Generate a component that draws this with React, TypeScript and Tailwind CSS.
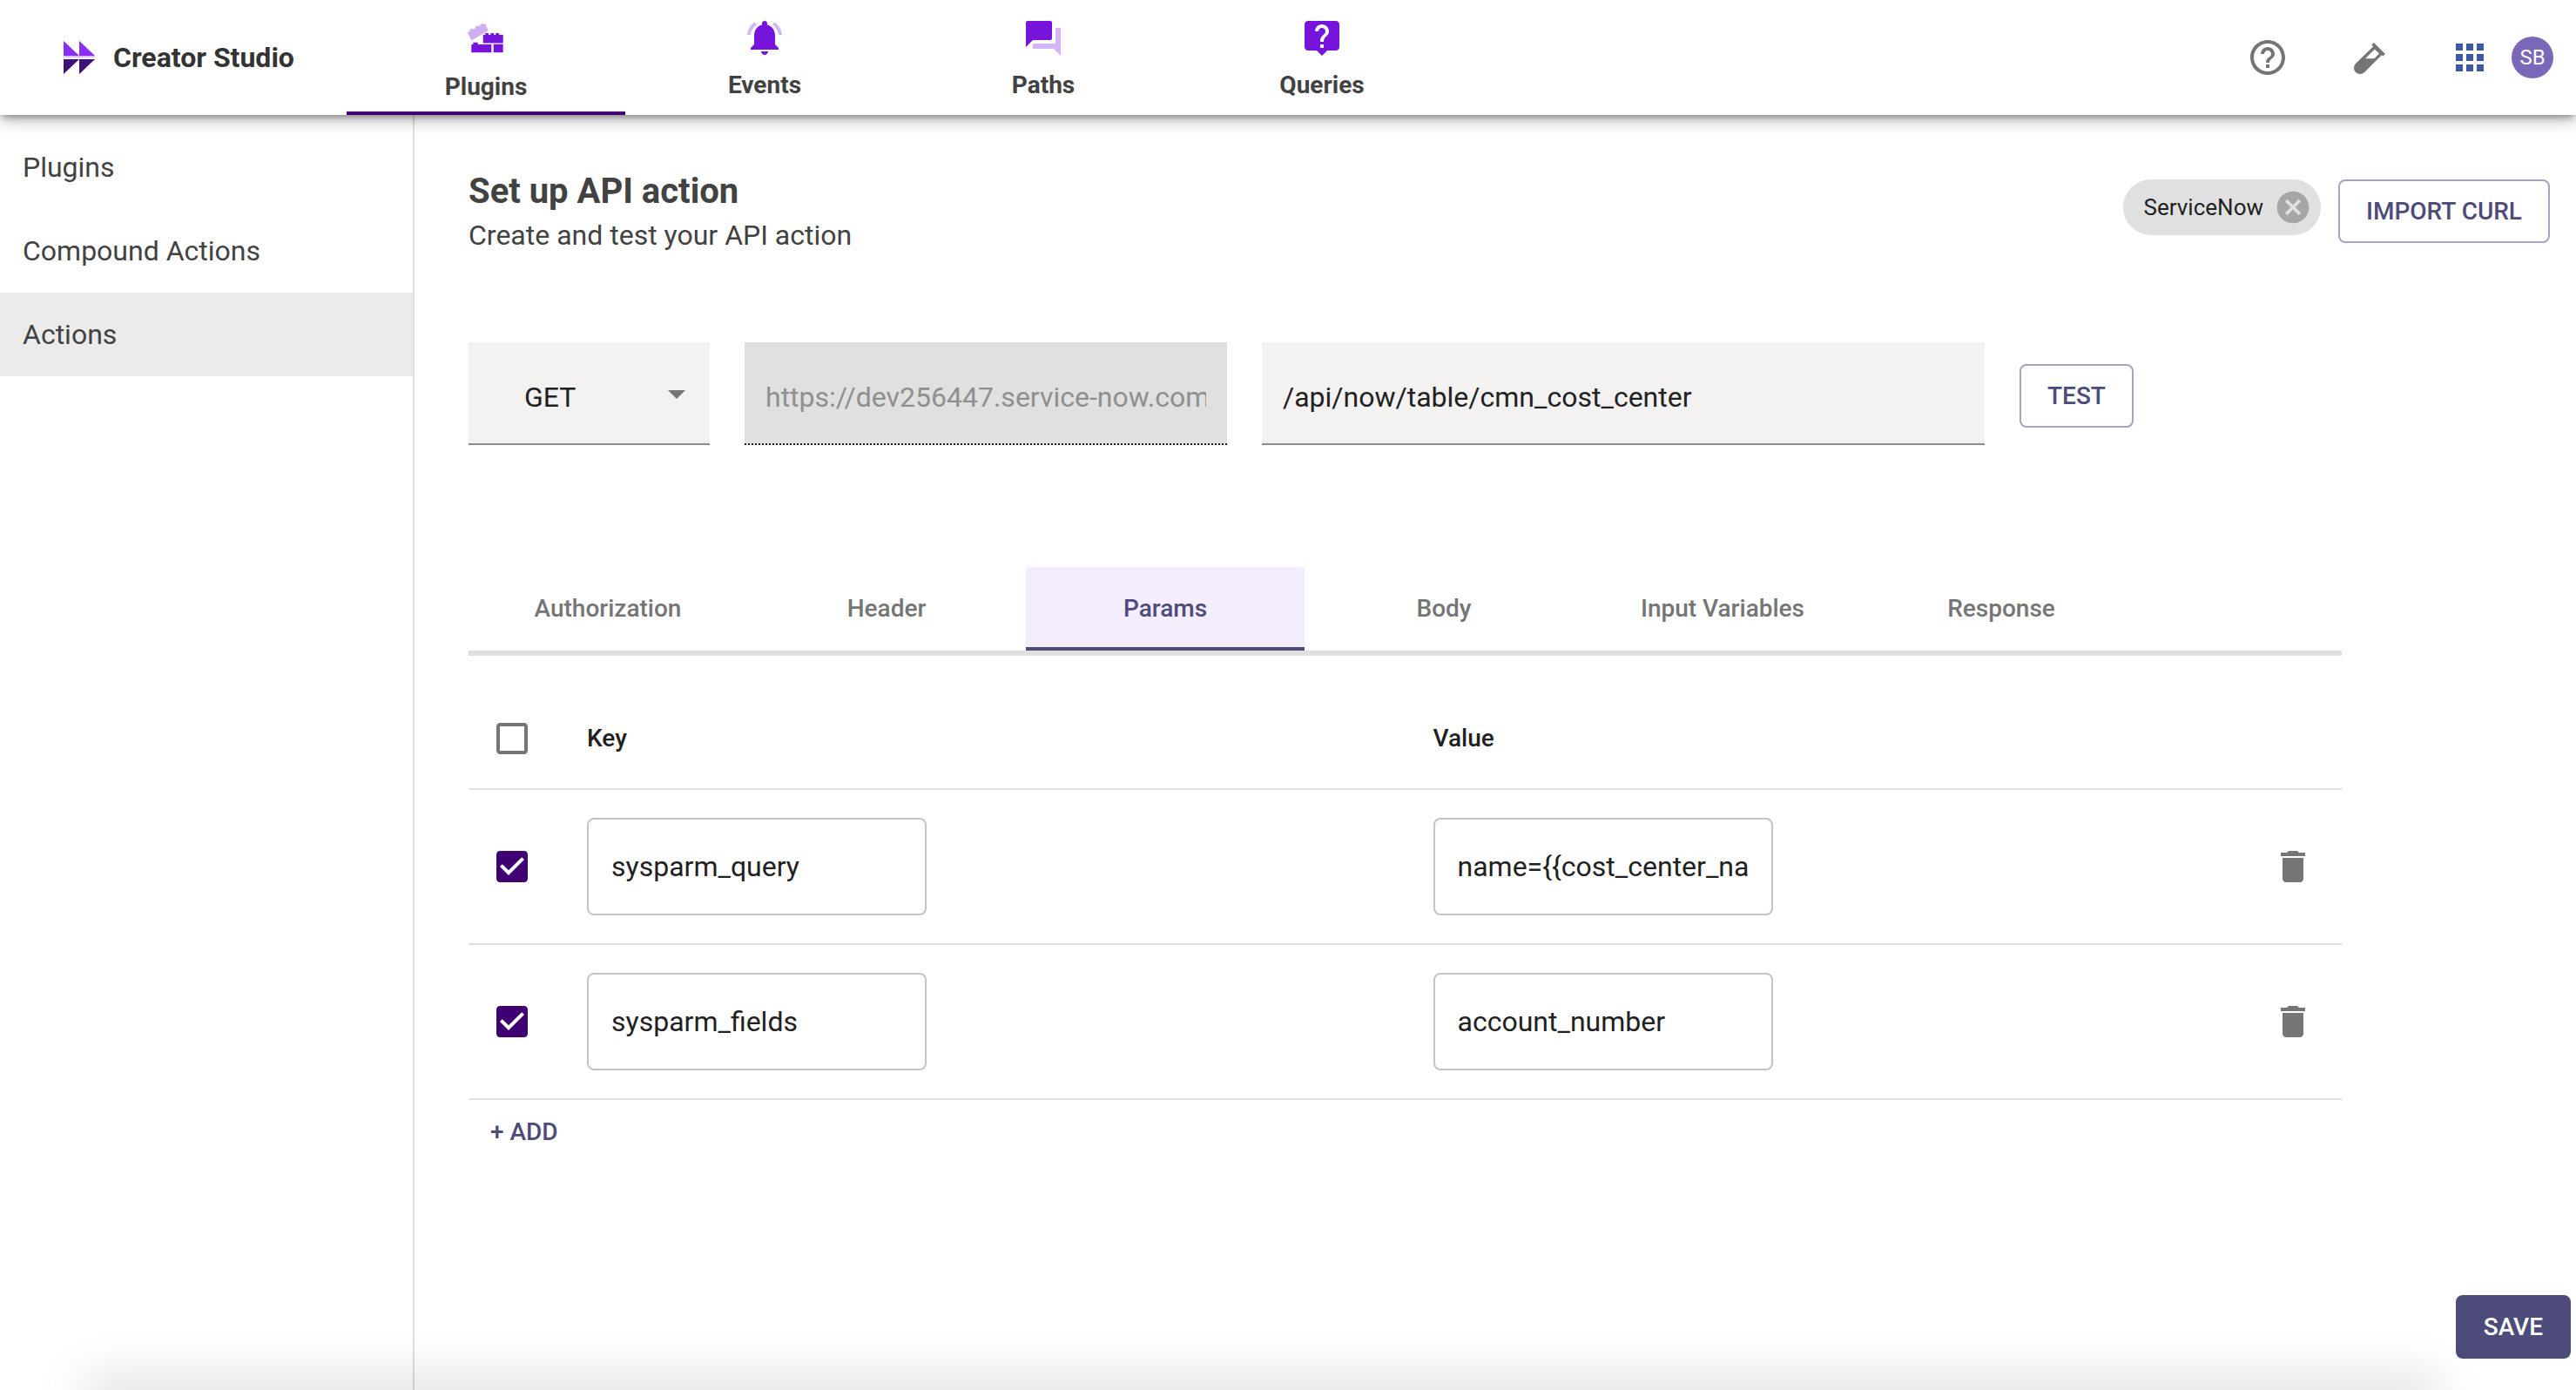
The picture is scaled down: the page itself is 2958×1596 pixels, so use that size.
import React, { useState } from "react";

const navItems = ["Plugins", "Events", "Paths", "Queries"];
const sideItems = ["Plugins", "Compound Actions", "Actions"];
const tabs = ["Authorization", "Header", "Params", "Body", "Input Variables", "Response"];
const initialRows = [
  { key: "sysparm_query", value: "name={{cost_center_name}}" },
  { key: "sysparm_fields", value: "account_number" },
];

function NavIcon({ name }: { name: string }) {
  if (name === "Plugins")
    return (
      <svg viewBox="-1 0 50 50" className="size-[50px]" aria-hidden="true">
        <path
          d="M7.500 26.500 2.800 17.600 5.500 15.800 5.200 14.300 8.400 12.600 9.500 13.700 12 12.300 11.800 10.800 14.600 9.200 16 10.300 17.600 9.400 17.500 8.300 20.400 7 21.600 8 23.600 7.600 26.500 15.200Z"
          fill="#cfaef2"
        />
        <path
          d="M20.700 20h2.600v-2h3.600v2h2.600v-2h3.600v2h2.200v-2h3.600v2h4.800v9.500h-23zM7.300 31h2v-2.300h5.400V31h15.600v9.300h-23zM32.700 30.800h11v9.500h-11z"
          fill="#7614dc"
        />
      </svg>
    );
  if (name === "Events")
    return (
      <svg viewBox="0 0 24 24" className="size-12" aria-hidden="true">
        <path
          d="M7.600 4.100 6.200 2.700C3.800 4.500 2.200 7 2 10h2c.2-2.400 1.500-4.500 3.600-5.900zM20 10h2c-.2-3-1.800-5.500-4.200-7.300l-1.400 1.400c2 1.400 3.400 3.500 3.600 5.900z"
          fill="#d4b5f6"
        />
        <path
          d="M18 10.500c0-3.100-1.600-5.600-4.500-6.300v-.7a1.500 1.500 0 0 0-3 0v.7C7.600 4.900 6 7.400 6 10.500v5l-2 2v1h16v-1l-2-2zM12 21.500c1.100 0 2-.9 2-2h-4c0 1.100.9 2 2 2z"
          fill="#7614dc"
        />
      </svg>
    );
  if (name === "Paths")
    return (
      <svg viewBox="0 0 24 24" className="size-12" aria-hidden="true">
        <path d="M22 6h-3v9H6v3h12l4 4z" fill="#d4b5f6" />
        <path d="M17 12V3c0-.55-.45-1-1-1H3c-.55 0-1 .45-1 1v14l4-4h10c.55 0 1-.45 1-1z" fill="#7614dc" />
      </svg>
    );
  return (
    <svg viewBox="0 0 24 24" className="size-12" aria-hidden="true">
      <path
        d="M20 2H4c-1.100 0-2 .9-2 2v13c0 1.100.9 2 2 2h5l3 3 3-3h5c1.100 0 2-.9 2-2V4c0-1.100-.9-2-2-2zm-7 15.500h-2v-2h2v2zm2.070-7.250-.9.920c-.72.730-1.170 1.330-1.170 2.830h-2v-.5c0-1.100.45-2.100 1.170-2.830l1.240-1.260c.37-.36.590-.86.590-1.410 0-1.100-.9-2-2-2s-2 .9-2 2H8c0-2.210 1.790-4 4-4s4 1.790 4 4c0 .88-.36 1.680-.93 2.250z"
        fill="#7614dc"
      />
    </svg>
  );
}

function CheckBox({ checked, label, onChange }: { checked: boolean; label: string; onChange: () => void }) {
  return (
    <label className="relative grid size-12 cursor-pointer place-items-center">
      <input type="checkbox" aria-label={label} checked={checked} onChange={onChange} className="absolute size-9 opacity-0" />
      <svg viewBox="0 0 24 24" className="size-12" aria-hidden="true">
        {checked ? (
          <path
            d="M19 3H5c-1.110 0-2 .9-2 2v14c0 1.100.89 2 2 2h14c1.110 0 2-.9 2-2V5c0-1.100-.89-2-2-2zm-9 14-5-5 1.410-1.410L10 14.170l7.590-7.590L19 8l-9 9z"
            fill="#3f0071"
          />
        ) : (
          <path
            d="M19 5v14H5V5h14m0-2H5c-1.100 0-2 .9-2 2v14c0 1.100.9 2 2 2h14c1.100 0 2-.9 2-2V5c0-1.100-.9-2-2-2z"
            fill="#757575"
          />
        )}
      </svg>
    </label>
  );
}

export default function App() {
  const [tab, setTab] = useState("Params");
  const [all, setAll] = useState(false);
  const [rows, setRows] = useState(initialRows.map((r) => ({ ...r, on: true })));
  const edit = (i: number, patch: Partial<(typeof rows)[number]>) =>
    setRows(rows.map((r, j) => (j === i ? { ...r, ...patch } : r)));
  const toggleAll = () => {
    setAll(!all);
    setRows(rows.map((r) => ({ ...r, on: !all })));
  };

  return (
    <div className="relative flex min-h-screen flex-col overflow-hidden bg-white font-[Roboto,sans-serif] text-[#212121]">
      <header className="relative z-10 flex h-[132px] items-center bg-white shadow-[0_4px_8px_-2px_rgba(0,0,0,0.36),0_4px_20px_0_rgba(0,0,0,0.3)]">
        <a href="#" className="flex w-[398px] items-center gap-5 pl-[72px] text-[32px] font-bold whitespace-nowrap text-[#333]">
          <svg viewBox="0 0 38 38" className="size-[38px]" aria-hidden="true">
            <path d="M1 0 19 17V0l18 17H1z" fill="#8a2df5" />
            <path d="M1 17h36v2H1z" fill="#d8bdf8" />
            <path d="M1 21h36L19 38V21L1 38z" fill="#3f1279" />
          </svg>
          Creator Studio
        </a>
        <nav className="flex h-full flex-1">
          {navItems.map((n, i) => (
            <a
              key={n}
              href="#"
              className={
                "flex w-[320px] flex-col items-center gap-2 border-b-4 pt-5 text-[28px] leading-[44px] font-bold text-[#424242] " +
                (i === 0 ? "border-[#3f0071]" : "border-transparent")
              }
            >
              <NavIcon name={n} />
              {n}
            </a>
          ))}
        </nav>
        <div className="flex items-center pr-[26px]">
          <button aria-label="Help" className="mr-[68px]">
            <svg viewBox="0 0 24 24" className="size-12" fill="#757575" aria-hidden="true">
              <path d="M11 18h2v-2h-2v2zm1-16C6.480 2 2 6.480 2 12s4.480 10 10 10 10-4.480 10-10S17.520 2 12 2zm0 18c-4.410 0-8-3.590-8-8s3.590-8 8-8 8 3.590 8 8-3.590 8-8 8zm0-14c-2.210 0-4 1.790-4 4h2c0-1.100.9-2 2-2s2 .9 2 2c0 2-3 1.750-3 5h2c0-2.250 3-2.500 3-5 0-2.210-1.790-4-4-4z" />
            </svg>
          </button>
          <button aria-label="Sandbox" className="mr-[68px]">
            <svg viewBox="0 0 24 24" className="size-12" fill="#757575" fillRule="evenodd" aria-hidden="true">
              <path d="M15 3.500 21.500 10 20.200 11.300 19.400 10.600 9.500 20.500A3.500 3.500 0 0 1 4.500 15.500L14.500 5.700 13.700 4.800ZM15.400 7.200 10 12.600H15.200L18 9.800Z" />
            </svg>
          </button>
          <button aria-label="Apps" className="mr-6">
            <svg viewBox="0 0 24 24" className="size-12" fill="#3d5a9f" aria-hidden="true">
              <path d="M4 8h4V4H4v4zm6 12h4v-4h-4v4zm-6 0h4v-4H4v4zm0-6h4v-4H4v4zm6 0h4v-4h-4v4zm6-10v4h4V4h-4zm-6 4h4V4h-4v4zm6 6h4v-4h-4v4zm0 6h4v-4h-4v4z" />
            </svg>
          </button>
          <button className="grid size-12 place-items-center rounded-full bg-[#7c68b8] text-2xl text-white">SB</button>
        </div>
      </header>

      <div className="flex flex-1">
        <aside className="w-[476px] shrink-0 border-r-2 border-[#e0e0e0] pt-3">
          {sideItems.map((s) => (
            <a
              key={s}
              href="#"
              className={
                "flex h-24 items-center px-[26px] text-[32px] text-[#424242] " + (s === "Actions" ? "bg-[#ebebeb]" : "")
              }
            >
              {s}
            </a>
          ))}
        </aside>

        <main className="flex min-w-0 flex-1 flex-col pt-[62px] pl-[62px]">
          <div className="flex items-start justify-between pr-[30px]">
            <div className="text-[#424242]">
              <h1 className="text-[40px] leading-[52px] font-bold">Set up API action</h1>
              <p className="text-[32px] leading-[48px]">Create and test your API action</p>
            </div>
            <div className="flex items-start gap-5 pt-3">
              <span className="flex h-16 items-center gap-3 rounded-full bg-[#e0e0e0] pr-[10px] pl-6 text-[26px]">
                ServiceNow
                <button aria-label="Remove ServiceNow">
                  <svg viewBox="0 0 24 24" className="size-11" fill="#a6a6a6" aria-hidden="true">
                    <path d="M12 2C6.470 2 2 6.470 2 12s4.470 10 10 10 10-4.470 10-10S17.530 2 12 2zm5 13.590L15.590 17 12 13.410 8.410 17 7 15.590 10.590 12 7 8.410 8.410 7 12 10.590 15.590 7 17 8.410 13.410 12 17 15.590z" />
                  </svg>
                </button>
              </span>
              <button className="h-[73px] rounded-lg border-2 border-[#a7a3c0] px-[30px] text-[28px] font-medium text-[#4d4b79]">
                IMPORT CURL
              </button>
            </div>
          </div>

          <div className="mt-[99px] flex h-[118px] gap-10">
            <div className="relative w-[277px]">
              <select
                aria-label="Method"
                className="size-full appearance-none border-b-2 border-[#8c8c8c] bg-[#f3f2f0] pt-[10px] pl-16 text-[32px]"
              >
                <option>GET</option>
                <option>POST</option>
              </select>
              <span className="pointer-events-none absolute top-[55px] right-7 border-x-10 border-t-10 border-x-transparent border-t-[#757575]" />
            </div>
            <input
              aria-label="Base URL"
              disabled
              defaultValue="https://dev256447.service-now.com/"
              className="w-[554px] border-b-2 border-dotted border-[#212121] bg-[#e0e0e0] px-6 pt-[10px] text-[32px] text-[#8f8f8f]"
            />
            <input
              aria-label="Path"
              defaultValue="/api/now/table/cmn_cost_center"
              className="w-[830px] border-b-2 border-[#8c8c8c] bg-[#f3f2f0] px-6 pt-[10px] text-[32px]"
            />
            <button className="mt-[25px] h-[73px] rounded-lg border-2 border-[#a7a3c0] px-[30px] text-[28px] font-medium text-[#4d4b79]">
              TEST
            </button>
          </div>

          <div className="mr-[269px]">
            <div role="tablist" className="mt-[140px] flex border-b-6 border-[#e0e0e0]">
              {tabs.map((t) => (
                <button
                  key={t}
                  role="tab"
                  aria-selected={t === tab}
                  onClick={() => setTab(t)}
                  className={
                    "h-24 w-[320px] border-b-4 pt-1 text-[28px] font-medium " +
                    (t === tab ? "border-[#4d4b79] bg-[#f3edfd] text-[#4d4b79]" : "border-transparent text-[#757575]")
                  }
                >
                  {t}
                </button>
              ))}
            </div>

            <table className="mt-[37px] w-full table-fixed text-left">
              <colgroup>
                <col className="w-[120px]" />
                <col />
                <col />
                <col className="w-[88px]" />
              </colgroup>
              <thead>
                <tr className="h-[116px] border-b-2 border-[#e0e0e0]">
                  <th className="pl-[26px]">
                    <CheckBox checked={all} label="Select all" onChange={toggleAll} />
                  </th>
                  <th className="pl-4 text-[28px] font-medium">Key</th>
                  <th className="pl-4 text-[28px] font-medium">Value</th>
                  <th />
                </tr>
              </thead>
              <tbody>
                {rows.map((r, i) => (
                  <tr key={i} className="h-[178px] border-b-2 border-[#e0e0e0]">
                    <td className="pl-[26px]">
                      <CheckBox checked={r.on} label={"Use " + r.key} onChange={() => edit(i, { on: !r.on })} />
                    </td>
                    <td className="pl-4">
                      <input
                        aria-label="Key"
                        value={r.key}
                        onChange={(e) => edit(i, { key: e.target.value })}
                        className="h-28 w-[390px] rounded-lg border-2 border-[#c4c4c4] px-[26px] text-[32px]"
                      />
                    </td>
                    <td className="pl-4">
                      <input
                        aria-label="Value"
                        value={r.value}
                        onChange={(e) => edit(i, { value: e.target.value })}
                        className="h-28 w-[390px] rounded-lg border-2 border-[#c4c4c4] px-[26px] text-[32px]"
                      />
                    </td>
                    <td className="pl-2">
                      <button aria-label={"Delete " + r.key} onClick={() => setRows(rows.filter((_, j) => j !== i))} className="block">
                        <svg viewBox="0 0 24 24" className="size-12" fill="#757575" aria-hidden="true">
                          <path d="M6 19c0 1.100.9 2 2 2h8c1.100 0 2-.9 2-2V7H6v12zM19 4h-3.500l-1-1h-5l-1 1H5v2h14V4z" />
                        </svg>
                      </button>
                    </td>
                  </tr>
                ))}
              </tbody>
            </table>
            <button
              onClick={() => setRows([...rows, { key: "", value: "", on: true }])}
              className="h-[73px] px-[25px] text-[28px] font-medium text-[#4d4b79]"
            >
              + ADD
            </button>
          </div>

          <div className="mt-auto flex justify-end pr-[6px] pb-[36px]">
            <button className="h-[73px] rounded-lg bg-[#4d4b79] px-8 text-[28px] font-medium text-white">SAVE</button>
          </div>
        </main>
      </div>
      <div className="pointer-events-none absolute right-[170px] -bottom-4 left-[110px] h-4 shadow-[0_0_56px_14px_rgba(0,0,0,0.14)]" />
    </div>
  );
}
